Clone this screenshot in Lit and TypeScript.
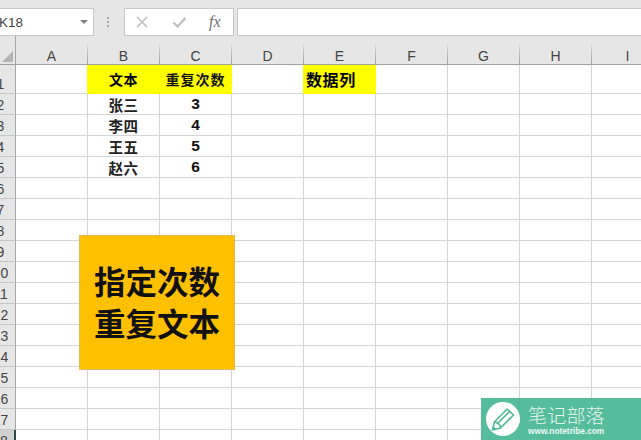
import { LitElement, html, css, svg } from "lit";
import { customElement } from "lit/decorators.js";

const COLS = ["A", "B", "C", "D", "E", "F", "G", "H", "I"];
const ROW_COUNT = 18;
const CELLS: Record<string, { t: string; c?: string }> = {
  B1: { t: "文本", c: "yellow head" },
  C1: { t: "重复次数", c: "yellow head wide" },
  E1: { t: "数据列", c: "yellow label" },
  B2: { t: "张三", c: "body" },
  C2: { t: "3", c: "body num" },
  B3: { t: "李四", c: "body" },
  C3: { t: "4", c: "body num" },
  B4: { t: "王五", c: "body" },
  C4: { t: "5", c: "body num" },
  B5: { t: "赵六", c: "body" },
  C5: { t: "6", c: "body num" },
};

@customElement("app-root")
export class AppRoot extends LitElement {
  static styles = css`
    :host {
      display: block;
      position: relative;
      width: 641px;
      height: 440px;
      overflow: hidden;
      background: #fff;
      font-family: "Liberation Sans", "Noto Sans CJK SC", sans-serif;
      color: #000;
    }
    .toolbar {
      height: 36px;
      box-sizing: border-box;
      padding-top: 8px;
      background: #e6e6e6;
      display: flex;
      align-items: stretch;
    }
    .box {
      box-sizing: border-box;
      height: 28px;
      background: #fff;
      border: 1px solid #c8c8c8;
      display: flex;
      align-items: center;
    }
    .name {
      width: 95px;
      margin-left: -1px;
      font-size: 13.5px;
      color: #444;
      justify-content: space-between;
      padding-right: 5px;
    }
    .name span {
      margin-left: -1px;
    }
    .caret {
      width: 0;
      height: 0;
      border-left: 4px solid transparent;
      border-right: 4px solid transparent;
      border-top: 4px solid #808080;
    }
    .grip {
      width: 30px;
      box-sizing: border-box;
      padding-right: 2px;
      display: flex;
      flex-direction: column;
      align-items: center;
      justify-content: center;
      gap: 2px;
    }
    .grip i {
      width: 2px;
      height: 2px;
      background: #a6a6a6;
    }
    .fxbox {
      width: 110px;
      padding-left: 10px;
      gap: 22.5px;
    }
    .fxbox svg {
      flex: none;
    }
    .fx {
      font-family: "Liberation Serif", serif;
      font-style: italic;
      font-size: 16px;
      color: #6f6f6f;
    }
    .formula {
      flex: 1;
      margin-left: 3px;
      margin-right: -2px;
    }
    .grid {
      display: grid;
      grid-template-columns: 30px repeat(9, 72px);
      grid-template-rows: 29px 29px repeat(17, 21px);
      margin-left: -14px;
      width: 678px;
    }
    .corner {
      background: #e6e6e6;
      border-right: 1px solid #a6a6a6;
      border-bottom: 1px solid #a0a0a0;
      display: flex;
      align-items: flex-end;
      justify-content: flex-end;
      padding: 0 2px 2px 0;
      box-sizing: border-box;
    }
    .ch {
      box-sizing: border-box;
      background: #e6e6e6;
      border-right: 1px solid;
      border-image: linear-gradient(to bottom, #e6e6e6 20%, #b4b4b4 70%, #a0a0a0 100%) 1;
      border-bottom: 0;
      box-shadow: inset 0 -1px 0 #a0a0a0;
      display: flex;
      align-items: flex-end;
      justify-content: center;
      font-size: 14px;
      line-height: 16px;
      padding-bottom: 1px;
      color: #444;
    }
    .rh {
      box-sizing: border-box;
      background: #e6e6e6;
      border-right: 1px solid #a6a6a6;
      border-bottom: 1px solid #c6c6c6;
      display: flex;
      align-items: flex-end;
      justify-content: center;
      font-size: 14px;
      line-height: 18px;
      color: #444;
    }
    .rh.active {
      background: #d2d2d2;
      border-right: 2px solid #2f4a44;
    }
    .cell {
      box-sizing: border-box;
      border-right: 1px solid #d4d4d4;
      border-bottom: 1px solid #d4d4d4;
      display: flex;
      align-items: center;
      justify-content: center;
      white-space: nowrap;
    }
    .yellow {
      background: #ffff00;
      box-shadow: -1px 0 0 #ffff00;
      border-right-color: #ffff00;
      border-bottom-color: #ffff00;
    }
    .head {
      font-family: "Noto Sans CJK SC", sans-serif;
      font-weight: 700;
      font-size: 14px;
      letter-spacing: 0.6px;
    }
    .wide {
      letter-spacing: 1px;
      color: #141414;
    }
    .label {
      font-family: "Noto Sans CJK SC", sans-serif;
      font-weight: 700;
      font-size: 16px;
      letter-spacing: 0.6px;
      justify-content: flex-start;
      padding-left: 2px;
    }
    .body {
      font-family: "Noto Sans CJK SC", sans-serif;
      font-weight: 700;
      font-size: 14.5px;
      letter-spacing: 0.6px;
      color: #222;
    }
    .num {
      font-family: "Liberation Sans", sans-serif;
      font-size: 15.5px;
      letter-spacing: 0;
      color: #111;
    }
    .shape {
      position: absolute;
      left: 79px;
      top: 235px;
      width: 156px;
      height: 135px;
      box-sizing: border-box;
      padding-bottom: 4px;
      background: #ffc000;
      border: 1px solid #dcbb55;
      display: flex;
      flex-direction: column;
      align-items: center;
      justify-content: center;
      font-family: "Noto Sans CJK SC", sans-serif;
      font-weight: 700;
      font-size: 31.5px;
      line-height: 42px;
      color: #111;
    }
    .mark {
      position: absolute;
      right: 0;
      bottom: 0;
      width: 160px;
      height: 42px;
      background: rgba(78, 186, 151, 0.96);
      display: flex;
      align-items: center;
      padding-left: 5px;
      box-sizing: border-box;
      gap: 8px;
      color: #fff;
    }
    .disc {
      width: 34px;
      height: 34px;
      flex: none;
    }
    .mark-text {
      display: flex;
      flex-direction: column;
      align-items: flex-start;
      padding-top: 3px;
    }
    .mark-cn {
      font-family: "Noto Sans CJK SC", sans-serif;
      font-weight: 300;
      font-size: 19px;
      line-height: 20px;
      letter-spacing: 0.2px;
      opacity: 0.85;
    }
    .mark-en {
      font-family: "Liberation Sans", sans-serif;
      font-weight: 700;
      font-size: 8.3px;
      line-height: 10px;
      margin-top: 1px;
      opacity: 0.9;
    }
  `;

  private pencil() {
    return svg`<svg class="disc" viewBox="0 0 34 34">
      <circle cx="17" cy="17" r="17" fill="#fff"/>
      <g fill="none" stroke="#4eba97" stroke-width="1.6" stroke-linejoin="round" stroke-linecap="round">
        <path d="M6.5 28 L8.5 20 L21 7 L27.5 13 L14.5 26 Z"/>
        <path d="M8.5 20 C10 20 11 20.5 11.5 21.5 C13 21.5 14 23 14.5 26"/>
        <path d="M11.5 21.5 L23.5 9.5"/>
      </g>
      <path d="M6.5 28 L7.4 24.2 L10.2 26.9 Z" fill="#4eba97"/>
    </svg>`;
  }

  render() {
    const rows = Array.from({ length: ROW_COUNT }, (_, i) => i + 1);
    return html`
      <div class="toolbar">
        <div class="box name">
          <span>K18</span>
          <div class="caret"></div>
        </div>
        <div class="grip"><i></i><i></i><i></i></div>
        <div class="box fxbox">
          <svg width="14" height="14" viewBox="0 0 14 14">
            <path d="M2 2 L12 12 M12 2 L2 12" stroke="#bdbdbd" stroke-width="1.6" fill="none"/>
          </svg>
          <svg width="15" height="14" viewBox="0 0 15 14">
            <path d="M1.5 7.5 L5.5 11.5 L13.5 3" stroke="#bdbdbd" stroke-width="2.2" fill="none"/>
          </svg>
          <span class="fx">fx</span>
        </div>
        <div class="box formula"></div>
      </div>
      <div class="grid">
        <div class="corner">
          <svg width="11" height="11" viewBox="0 0 11 11"><path d="M11 0 V11 H0 Z" fill="#b4b4b4"/></svg>
        </div>
        ${COLS.map((c) => html`<div class="ch">${c}</div>`)}
        ${rows.map(
          (r) => html`
            <div class="rh ${r === 18 ? "active" : ""}">${r}</div>
            ${COLS.map((c) => {
              const cell = CELLS[c + r];
              return html`<div class="cell ${cell?.c ?? ""}">${cell?.t ?? ""}</div>`;
            })}
          `
        )}
      </div>
      <div class="shape"><div>指定次数</div><div>重复文本</div></div>
      <div class="mark">
        ${this.pencil()}
        <div class="mark-text">
          <div class="mark-cn">笔记部落</div>
          <div class="mark-en">www.notetribe.com</div>
        </div>
      </div>
    `;
  }
}
